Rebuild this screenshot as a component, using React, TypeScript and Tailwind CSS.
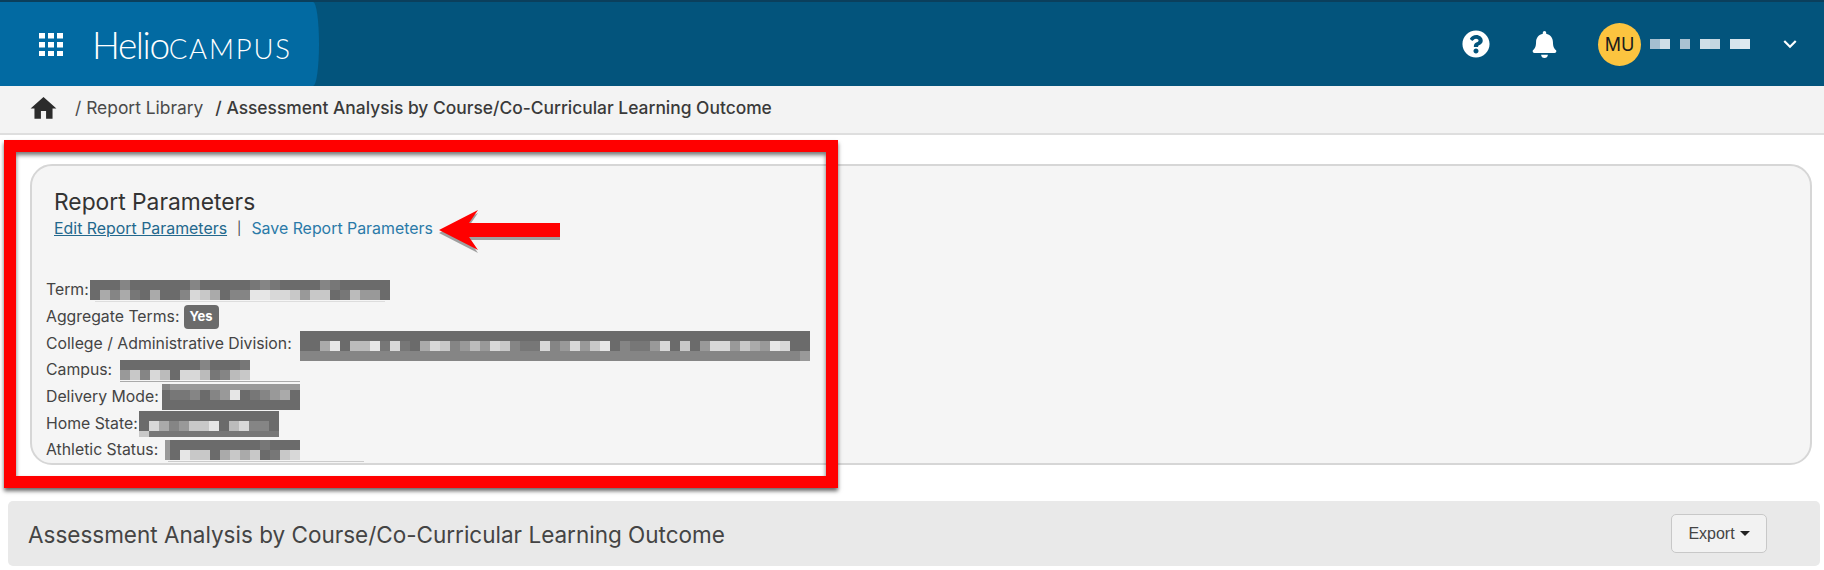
import { FaBell, FaQuestionCircle } from 'react-icons/fa'
import { MdHome, MdKeyboardArrowDown } from 'react-icons/md'

const grays: Record<string, string> = {
  '6': '#6b6b6b',
  '7': '#777777',
  '8': '#858585',
  '9': '#999999',
  a: '#aaaaaa',
  b: '#bbbbbb',
  c: '#c8c8c8',
  d: '#d8d8d8',
  e: '#e6e6e6',
}

interface MosaicRow {
  h: number
  cells: string
}

interface MosaicProps {
  rows: MosaicRow[]
  width: number
  shift?: number
  /** Thin rule left under some of the redacted values. */
  line?: { x: number; w: number; color: string }
}

// Redacted values in the report parameters, drawn as 10px pixel blocks
function Mosaic({ rows, width, shift = 0, line }: MosaicProps) {
  const height = rows.reduce((sum, r) => sum + r.h, 0)
  let y = 0
  return (
    <svg width={width} height={height} className="block shrink-0 overflow-visible" aria-hidden>
      {rows.map((r, ri) => {
        const top = y
        y += r.h
        return r.cells
          .split('')
          .map((c, i) => (
            <rect key={`${ri}-${i}`} x={Math.max(i * 10 - shift, 0)} y={top} width={i === 0 ? 10 - shift : 10} height={r.h} fill={grays[c]} />
          ))
      })}
      {line && <rect x={line.x} y={height + 1} width={line.w} height={1} fill={line.color} />}
    </svg>
  )
}

function Row({ label, children }: { label: string; children?: React.ReactNode }) {
  return (
    <div className="flex h-[26.67px] items-center whitespace-nowrap">
      <span>{label}</span>
      {children}
    </div>
  )
}

const d = (n: number) => '6'.repeat(n)

export default function App() {
  return (
    <div className="relative h-[570px] w-[1824px] overflow-hidden bg-white font-['Inter',sans-serif] text-[#444]">
      {/* Top bar */}
      <header className="flex h-[86px] items-stretch border-t-2 border-[#0b3f5c] bg-[#03547c] text-white">
        <div className="flex w-[319px] items-center rounded-r-[6px_43px] bg-[#026aa2] pl-[39px]">
          <svg width="24" height="23" viewBox="0 0 24 23" fill="#fff" aria-hidden>
            {[0, 9, 18].map((y) =>
              [0, 9, 18].map((x) => <rect key={`${x}-${y}`} x={x} y={y} width="6" height="5.5" />),
            )}
          </svg>
          <span className="ml-[29px] flex items-baseline font-['Lato',sans-serif] leading-none">
            <span className="text-[37px] font-light tracking-[-1.4px]">Helio</span>
            <span className="text-[27.5px] font-light tracking-[1.8px]">CAMPUS</span>
          </span>
        </div>
        <div className="ml-auto flex items-center pr-[21px]">
          <FaQuestionCircle className="mr-[41px] size-[28px]" />
          <FaBell className="mr-[40px] size-[27px]" />
          <div className="flex size-[43px] items-center justify-center rounded-full bg-[#fcc43f] text-[18px] text-[#1c1c1c]">
            MU
          </div>
          <div className="ml-[9px] mr-[27px] flex h-[10px] w-[100px]">
            <span className="w-[10px] bg-[#a5bfd0]" />
            <span className="w-[10px] bg-[#cfdfe8]" />
            <span className="ml-[10px] w-[10px] bg-[#a9c2d2]" />
            <span className="ml-[10px] w-[10px] bg-[#cfdfe8]" />
            <span className="w-[10px] bg-[#c3d6e1]" />
            <span className="ml-[10px] w-[10px] bg-[#d6e4ec]" />
            <span className="w-[10px] bg-[#dfeaf0]" />
          </div>
          <MdKeyboardArrowDown className="size-[26px]" />
        </div>
      </header>

      {/* Breadcrumb */}
      <nav className="flex h-[49px] items-center border-b-2 border-[#dedede] bg-[#f3f3f3] pb-[2px] pl-[28px] text-[17.4px] text-[#4a4a4a]">
        <MdHome className="size-[31px] text-[#2b2b2b]" />
        <span className="ml-[16px]">/ Report Library</span>
        <span className="ml-[12px] font-medium text-[#3a3a3a]">/ Assessment Analysis by Course/Co-Curricular Learning Outcome</span>
      </nav>

      {/* Report parameters panel */}
      <section className="ml-[30px] mr-[12px] mt-[29px] h-[301px] rounded-[22px] border-2 border-[#d6d6d6] bg-[#f5f5f5] pl-[14px] pt-[21px] text-[15.8px]">
        <h2 className="ml-[8px] h-[29px] text-[22.8px] leading-[29px] text-[#333]">Report Parameters</h2>
        <div className="ml-[8px] flex h-[24px] items-center pt-[2px] text-[15.9px]">
          <a className="text-[#23688d] underline">Edit Report Parameters</a>
          <span className="mx-[10px] text-[13px] text-[#444]">|</span>
          <a className="text-[#2a7aa8]">Save Report Parameters</a>
        </div>
        <div className="mt-[37px]">
          <Row label="Term:">
            <span className="ml-[1px]">
              <Mosaic
                width={300}
                line={{ x: 5, w: 290, color: '#dddddd' }}
                rows={[
                  { h: 10, cells: '666866666686666678766668766666' },
                  { h: 10, cells: '6a8a76a668dca688eeddc9cc67b996' },
                ]}
              />
            </span>
          </Row>
          <Row label="Aggregate Terms:">
            <span className="ml-[4px] flex h-[24px] w-[35px] items-center justify-center rounded-[4px] bg-[#6b6b6b] text-[13px] font-bold text-white">
              Yes
            </span>
          </Row>
          <Row label="College / Administrative Division:">
            <span className="ml-[8px] mt-[4px]">
              <Mosaic
                width={510}
                rows={[
                  { h: 10, cells: d(51) },
                  { h: 10, cells: '66ae6bbe7d76adc89b9dc877d89d9ce68779d6c69dd9ca9ed66' },
                  { h: 10, cells: '8'.repeat(50) + '9' },
                ]}
              />
            </span>
          </Row>
          <Row label="Campus:">
            <span className="ml-[8px]">
              <Mosaic
                width={130}
                line={{ x: 0, w: 180, color: '#aaaaaa' }}
                rows={[
                  { h: 10, cells: '6666666686667' },
                  { h: 10, cells: '9c8db6ddb78bc' },
                ]}
              />
            </span>
          </Row>
          <Row label="Delivery Mode:">
            <span className="ml-[3px]">
              <Mosaic
                width={138}
                shift={2}
                rows={[
                  { h: 6, cells: '8' + '9'.repeat(13) },
                  { h: 10, cells: '6778689e6789a6' },
                  { h: 10, cells: d(14) },
                ]}
              />
            </span>
          </Row>
          <Row label="Home State:">
            <span className="ml-[1px]">
              <Mosaic
                width={140}
                rows={[
                  { h: 10, cells: d(14) },
                  { h: 10, cells: '6da89cce6bd886' },
                  { h: 6, cells: 'c' + '7'.repeat(13) },
                ]}
              />
            </span>
          </Row>
          <Row label="Athletic Status:">
            <span className="ml-[7px]">
              <Mosaic
                width={135}
                shift={5}
                line={{ x: 3, w: 196, color: '#cccccc' }}
                rows={[
                  { h: 10, cells: '96666666667666' },
                  { h: 10, cells: '96ecc6acac67cd' },
                ]}
              />
            </span>
          </Row>
        </div>
      </section>

      {/* Report title bar */}
      <div className="ml-[8px] mr-[4px] mt-[36px] flex h-[65px] items-center justify-between rounded-[5px] bg-[#e9e9e9] pl-[20px] pr-[53px]">
        <h1 className="pt-[2px] text-[22.5px] text-[#444]">Assessment Analysis by Course/Co-Curricular Learning Outcome</h1>
        <button className="flex h-[39px] w-[96px] items-center justify-center gap-[5px] rounded-[5px] border border-[#c8c8c8] bg-[#f2f2f2] font-['Liberation_Sans',sans-serif] text-[16px] text-[#444]">
          Export
          <span className="border-x-[5px] border-t-[5px] border-x-transparent border-t-[#222]" />
        </button>
      </div>

      {/* Annotation: red box and arrow drawn over the screenshot */}
      <div className="absolute left-[4px] top-[140px] h-[348px] w-[834px] border-12 border-[#ff0000] shadow-[0_3px_4px_rgba(0,0,0,0.6),inset_0_3px_4px_rgba(0,0,0,0.55)]" />
      <svg className="absolute left-[436px] top-[206px]" width="130" height="52" viewBox="0 0 130 52" aria-hidden>
        <path d="M3 24 L42 4 L33 17 L124 17 L124 31 L33 31 L42 44 Z" fill="#000" opacity="0.35" transform="translate(0 3)" />
        <path d="M3 24 L42 4 L33 17 L124 17 L124 31 L33 31 L42 44 Z" fill="#ff0000" />
      </svg>
    </div>
  )
}
